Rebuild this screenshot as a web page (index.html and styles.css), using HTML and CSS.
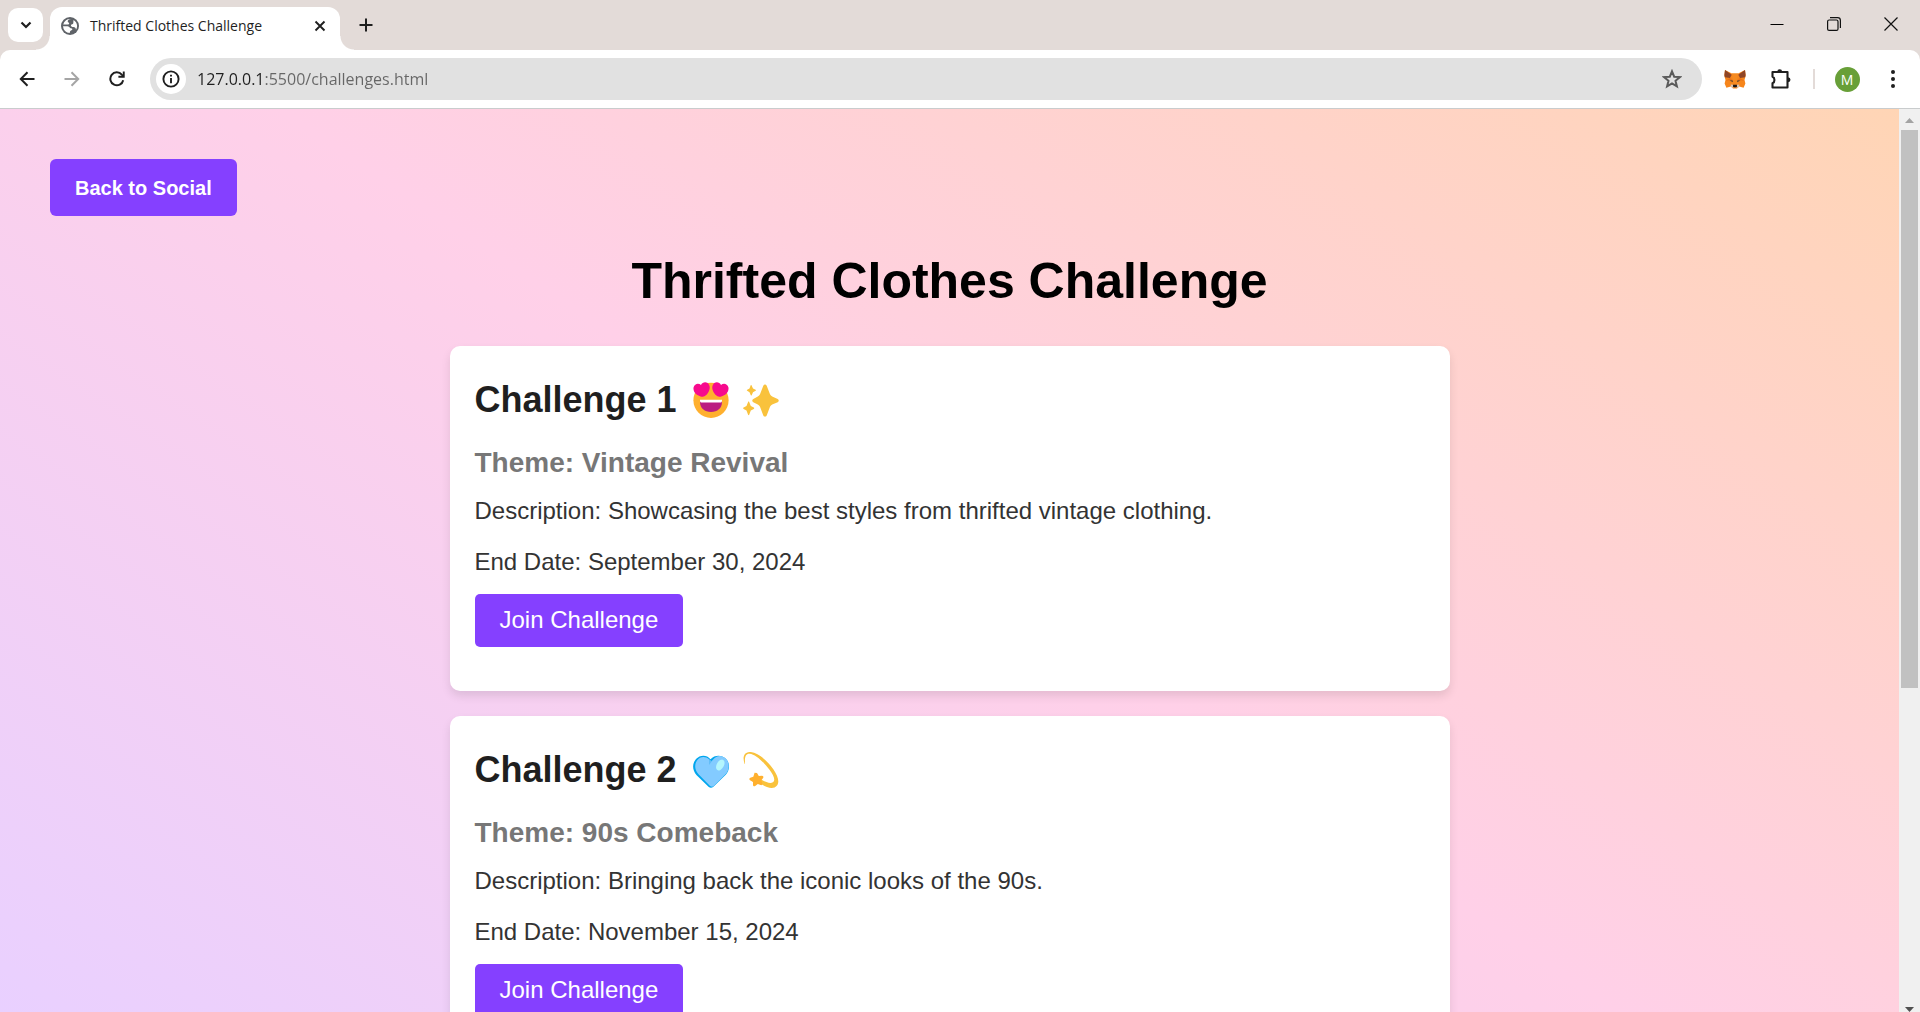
FILE: index.html
```html
<!DOCTYPE html>
<html lang="en">
<head>
<meta charset="utf-8">
<title>Thrifted Clothes Challenge</title>
<link rel="stylesheet" href="styles.css">
</head>
<body>
<header class="browser">
  <div class="tabstrip">
    <button class="tab-search" aria-label="Search tabs"><svg width="12" height="8" viewBox="0 0 12 8"><path d="M1.5 1.5 6 6l4.500-4.500" fill="none" stroke="#1f1f1f" stroke-width="2.200"/></svg></button>
    <div class="tab">
      <svg class="favicon" width="18" height="18" viewBox="0 0 18 18"><circle cx="9" cy="9" r="9" fill="#5f6368"/><path d="M10 2c-1.800.4-3.300 1-3.300 2.300 0 1.200 1.500 1.100 1.500 2.100 0 .9-1.300 1.200-2.600 1.200H2.200A7 7 0 0 1 10 2z" fill="#fff"/><path d="M2 9.200h3.200c1.900 0 2.900.5 3.500 1.400.5.800 1.300.7 2 .9 1 .3.900 1.400-.2 1.700-1.600.4-1.400 1.500-1.800 2.800A7 7 0 0 1 2 9.200z" fill="#fff"/><path d="M12.600 3c2.100 1.300 3.500 3.500 3.500 6 0 1.400-.4 2.700-1.100 3.800-.2-1.900-1-2.600-2.600-2.800-1.700-.2-2.500-.7-2.500-1.600 0-1 1.200-1 1.900-1.400.9-.5.300-2.300.8-4z" fill="#fff"/></svg>
      <span class="tab-title">Thrifted Clothes Challenge</span>
      <button class="tab-close" aria-label="Close tab"><svg width="12" height="12" viewBox="0 0 12 12"><path d="m1.500 1.500 9 9m0-9-9 9" stroke="#1f1f1f" stroke-width="1.900"/></svg></button>
    </div>
    <button class="new-tab" aria-label="New tab"><svg width="14" height="14" viewBox="0 0 14 14"><path d="M7 .5v13M.5 7h13" stroke="#1f1f1f" stroke-width="2"/></svg></button>
    <div class="window-controls">
      <button aria-label="Minimize"><svg width="14" height="14" viewBox="0 0 14 14"><path d="M.5 7.500h13" stroke="#000"/></svg></button>
      <button aria-label="Restore"><svg width="14" height="14" viewBox="0 0 14 14"><g fill="none" stroke="#111" stroke-width="1.200"><rect x=".6" y="3" width="10.400" height="10.400" rx="1.500"/><path d="M3 .6h7.600a2.800 2.800 0 0 1 2.800 2.800V11"/></g></svg></button>
      <button aria-label="Close"><svg width="14" height="14" viewBox="0 0 14 14"><path d="m.5.500 13 13m0-13-13 13" stroke="#111" stroke-width="1.200"/></svg></button>
    </div>
  </div>
  <nav class="toolbar">
    <div class="nav-buttons">
      <button aria-label="Back"><svg width="16" height="16" viewBox="0 0 16 16"><path d="M15.500 8H2m6.500-6.700L1.800 8l6.700 6.700" fill="none" stroke="#1f1f1f" stroke-width="2"/></svg></button>
      <button aria-label="Forward"><svg width="16" height="16" viewBox="0 0 16 16"><path d="M.5 8H14M7.500 1.300 14.200 8l-6.700 6.700" fill="none" stroke="#a5a5a5" stroke-width="2"/></svg></button>
      <button aria-label="Reload"><svg width="16" height="16" viewBox="0 0 16 16"><path d="M14.200 9.200A6.500 6.500 0 1 1 12.800 3.600L14.500 5.500" fill="none" stroke="#1f1f1f" stroke-width="2"/><path d="M15.700.4v6.300H9.400V4.800h4.400V.4z" fill="#1f1f1f"/></svg></button>
    </div>
    <div class="omnibox">
      <button class="site-info" aria-label="View site information"><svg width="18" height="18" viewBox="0 0 18 18"><circle cx="9" cy="9" r="7.600" fill="none" stroke="#1f1f1f" stroke-width="1.900"/><path d="M9 8v5.200M9 4.700v1.900" stroke="#1f1f1f" stroke-width="1.900"/></svg></button>
      <input class="url" type="text" aria-label="Address and search bar" value="127.0.0.1:5500/challenges.html">
      <button class="bookmark" aria-label="Bookmark this tab"><svg width="20" height="20" viewBox="0 0 20 20"><path d="m10 2.300 2.200 5.400 5.700.4-4.400 3.700 1.400 5.600L10 14.400l-4.900 3 1.400-5.600L2.100 8.100l5.700-.4z" fill="none" stroke="#5a5a5a" stroke-width="2"/></svg></button>
    </div>
    <div class="extensions">
      <button aria-label="MetaMask"><svg width="22" height="20" viewBox="0 0 22 20"><path d="M1 1 8 4.500h6L21 1l.7 5.500-1.200 4.500.9 3.500-1.800 4.200-4.400-1.200-2.200 2H9l-2.200-2-4.400 1.200L.6 14.500l.9-3.500L.3 6.500z" fill="#f6851b"/><path d="m1 1 6.700 4.700L6 9 .8 8.300.4 6zM21 1l-6.700 4.700L16 9l5.200-.7.400-2.300z" fill="#8f4526"/><path d="M8 4.500h6l-.8 6L15 15H7l1.800-4.500z" fill="#f58a20"/><path d="m6 9 2.800 1.500L1.500 12zM16 9l-2.800 1.500 7.300 1.500z" fill="#e97317"/><path d="m5.500 11.500 3-.3.500 2zM16.500 11.500l-3-.3-.5 2z" fill="#5a4030"/><path d="m6.800 15.500 2.200.2.400 3.600-2.600-1.800zM15.200 15.500l-2.200.2-.4 3.600 2.600-1.800z" fill="#d8c5b4"/><path d="m9.200 15.700 3.600 0 .3 1.900-.8.700H9.700l-.8-.7z" fill="#17191c"/></svg></button>
      <button aria-label="Extensions"><svg width="22" height="22" viewBox="0 0 22 22"><path d="M2.500 4h15v15.500h-15v-4.300c2.600-1 2.600-5.500 0-6.500z" fill="none" stroke="#1f1f1f" stroke-width="2.100" stroke-linejoin="round"/><path d="M7.300 3.600a2.400 2.400 0 0 1 4.800 0zM18 9.200a2.500 2.500 0 0 1 0 5z" fill="#1f1f1f"/></svg></button>
      <span class="divider"></span>
      <button aria-label="Profile"><span class="avatar">M</span></button>
      <button aria-label="Menu"><svg width="4" height="18" viewBox="0 0 4 18"><g fill="#1f1f1f"><circle cx="2" cy="2" r="2"/><circle cx="2" cy="9" r="2"/><circle cx="2" cy="16" r="2"/></g></svg></button>
    </div>
  </nav>
</header>
<div class="viewport">
  <main class="page">
    <a class="back" href="#">Back to Social</a>
    <h1>Thrifted Clothes Challenge</h1>
    <section class="challenges">
      <article class="card">
        <h2>Challenge 1
          <span class="emojis">
            <svg role="img" aria-label="Heart eyes" width="36" height="36" viewBox="0 0 36 36"><circle cx="18" cy="18.300" r="17.600" fill="#ffb02e"/><path d="M7 18h22v2c0 6.200-4.600 10-11 10S7 26.200 7 20z" fill="#bb1d80"/><path d="M7 17.800h22v1.300c0 .9-.6 1.500-1.500 1.500h-19c-.9 0-1.500-.6-1.500-1.500z" fill="#fff"/><g fill="#f70a8d"><path d="M.6 5.200C1.700 1.600 5.600.7 8 3.100 9.400-.2 14-.7 15.900 2.400c1.700 2.900.6 6.300-1.200 8.900-1.100 1.600-2.500 2.900-3.800 3.300-1.700.5-4.500-.4-7-1.900C1.300 11 0 8 .6 5.200z"/><path d="M35.400 5.200C34.300 1.600 30.400.7 28 3.100 26.600-.2 22-.7 20.100 2.400c-1.700 2.900-.6 6.300 1.200 8.900 1.100 1.600 2.500 2.900 3.800 3.300 1.700.5 4.500-.4 7-1.900C34.700 11 36 8 35.400 5.200z"/></g></svg>
            <svg role="img" aria-label="Sparkles" width="36" height="36" viewBox="0 0 36 36"><g fill="#f9c23c"><path d="M20.300 3.800c.7-1.600 2.700-1.600 3.400 0l3.300 8.500c.5 1 1.200 1.800 2.200 2.200l5.500 2.400c1.400.6 1.400 2.700 0 3.300l-5.500 2.400c-1 .4-1.700 1.200-2.200 2.200l-3.300 8.600c-.7 1.600-2.700 1.600-3.400 0L17 24.800c-.5-1-1.200-1.800-2.200-2.200l-4.500-2.400c-1.400-.6-1.400-2.700 0-3.300l4.500-2.400c1-.4 1.700-1.200 2.200-2.200z"/><path d="M8.500 3.300 10 6.400l2.600 1.300c.5.200.5.900 0 1.100L10 10.200l-1.300 3c-.2.500-.7.500-.9 0l-1.300-3-2.300-1.400c-.5-.2-.5-.9 0-1.100l2.300-1.300 1.200-3.100c.2-.5.600-.5.800 0zM6.200 20l1.600 4 3 1.600c.6.300.6 1.100 0 1.400l-3 1.600-1.600 4.100c-.2.600-.9.600-1.100 0l-1.600-4.100-2.900-1.600c-.6-.3-.6-1.100 0-1.400l2.900-1.600 1.600-4c.2-.6.900-.6 1.100 0z"/></g></svg>
          </span>
        </h2>
        <h3>Theme: Vintage Revival</h3>
        <p>Description: Showcasing the best styles from thrifted vintage clothing.</p>
        <p>End Date: September 30, 2024</p>
        <button class="join">Join Challenge</button>
      </article>
      <article class="card">
        <h2>Challenge 2
          <span class="emojis">
            <svg role="img" aria-label="Light blue heart" width="36" height="36" viewBox="0 0 36 36"><path d="M17.500 7.200C13.500 2.300 7 2.700 3 7c-4 4.500-3.800 11 .4 16L15.500 34.700c1.700 1.500 3.300 1.500 4.900 0L33 22.600c4.300-5.500 3.900-12-.4-16-4.500-4-11-3.500-15.100.6z" fill="#00a6ed"/><path d="M19.500 8.200C24 2.600 29 3 32.600 6.600c4.300 4 4 10.500.2 15.400L21 33.700c-1.300 1.200-2.500 1.300-4 .2L5.500 22.300c-4.300-5.100-4-10.300-1.500-13.800 3-4.200 8.500-4.500 12-1.300l2 2.300z" fill="#83cbff"/><path d="M19 9.300 16 13V7.200z" fill="#62bdf7"/><ellipse cx="27.300" cy="13" rx="3.600" ry="5.900" transform="rotate(30 27.300 13)" fill="#b4f6fd"/></svg>
            <svg role="img" aria-label="Dizzy" width="36" height="36" viewBox="0 0 36 36"><path d="M1.700 12C-.6 6.200.4.500 6.500 0 14.500-.6 25 9.500 30.500 17.500 35.500 24.700 37.700 33 31.600 35.400 27.200 37 21 34.500 15.500 30l2.500-2.500c5 3 9.400 4.300 11.900 2.800 3-2.100.6-7.200-3.400-12.500C20.500 9.800 12.500 2.200 6.700 1.700 2.500 1.500 1.400 5.500 2.100 11.800z" fill="#f9c23c"/><path d="m11.500 19.800 2.500.3 1.800 2.800 3.200-.2c1.200 0 1.800 1.200 1.100 2.200l-1.900 2.500 1.100 2.900c.4 1.200-.6 2.200-1.700 1.800l-2.800-1-2.600 1.900c-1 .7-2.200 0-2.200-1.100v-3l-3-1.700c-1-.7-.8-2.100.3-2.500l3-.9 1-3z" transform="translate(0 1)" fill="#ffb02e"/></svg>
          </span>
        </h2>
        <h3>Theme: 90s Comeback</h3>
        <p>Description: Bringing back the iconic looks of the 90s.</p>
        <p>End Date: November 15, 2024</p>
        <button class="join">Join Challenge</button>
      </article>
    </section>
  </main>
  <div class="scrollbar" aria-hidden="true">
    <svg class="arrow" width="9" height="5" viewBox="0 0 9 5"><path d="M4.500 0 9 5H0z" fill="#a3a3a3"/></svg>
    <span class="thumb"></span>
    <svg class="arrow" width="9" height="5" viewBox="0 0 9 5"><path d="M0 0h9L4.500 5z" fill="#505050"/></svg>
  </div>
</div>
</body>
</html>
```
FILE: styles.css
```css
* { box-sizing: border-box; }

body {
  margin: 0;
  height: 100vh;
  display: flex;
  flex-direction: column;
  overflow: hidden;
  font-family: "Liberation Sans", Arial, sans-serif;
}

button { font: inherit; border: 0; padding: 0; background: none; cursor: pointer; }

/* Browser frame */
.browser {
  flex: none;
  background: #e3dbd8;
  border-bottom: 1px solid #c9cccd;
  font-family: "Open Sans", "Noto Sans", sans-serif;
}
.browser button { display: flex; align-items: center; justify-content: center; }

.tabstrip { display: flex; align-items: flex-end; height: 50px; padding-left: 8px; }
.browser .tab-search { width: 35px; height: 34px; margin: 0 7px 8px 0; background: #fff; border-radius: 10px; }
.tab {
  position: relative;
  display: flex;
  align-items: center;
  width: 290px;
  height: 43px;
  padding: 0 10px 6px 11px;
  background: #fff;
  border-radius: 12px 12px 0 0;
}
.tab::before, .tab::after {
  content: "";
  position: absolute;
  bottom: 0;
  width: 14px;
  height: 14px;
}
.tab::before { left: -14px; background: radial-gradient(circle at 0 0, transparent 13px, #fff 14px); }
.tab::after { right: -14px; background: radial-gradient(circle at 100% 0, transparent 13px, #fff 14px); }
.tab-title { flex: 1; margin-left: 11px; font-size: 14px; color: #1f1f1f; white-space: nowrap; }
.tab-close { width: 20px; height: 20px; }
.new-tab { width: 36px; height: 36px; margin: 0 0 7px 8px; }
.window-controls { display: flex; align-self: flex-start; margin: 0 1px 0 auto; }
.window-controls button { width: 57px; height: 48px; }

.toolbar {
  display: flex;
  align-items: center;
  height: 58px;
  padding: 0 5px;
  background: #fff;
  border-radius: 10px 10px 0 0;
}
.toolbar button { width: 44px; height: 42px; }
.nav-buttons { display: flex; gap: 1px; }
.omnibox {
  flex: 1;
  display: flex;
  align-items: center;
  height: 42px;
  margin: 0 11px;
  padding: 0 8px 0 6px;
  background: #e1e1e1;
  border-radius: 21px;
}
.toolbar .site-info { width: 30px; height: 30px; background: #fff; border-radius: 50%; }
.url {
  flex: 1;
  margin-left: 11px;
  padding: 0;
  border: 0;
  outline: 0;
  font-family: inherit;
  font-size: 16px;
  color: transparent;
  background: linear-gradient(90deg, #1f1f1f 68px, #666 68px);
  -webkit-background-clip: text;
  background-clip: text;
}
.extensions { display: flex; align-items: center; gap: 2px; }
.divider { width: 2px; height: 20px; margin: 0 8px; background: #e3dbd8; }
.avatar {
  width: 25px;
  height: 25px;
  border-radius: 50%;
  background: #689f38;
  color: #fff;
  font-size: 14px;
  line-height: 25px;
}

/* Page area */
.viewport { flex: 1; min-height: 0; display: flex; }
.page {
  flex: 1;
  padding: 50px;
  overflow: hidden;
  background: linear-gradient(34deg, #e9d0ff, #ffd0e8 50%, #ffd5b5);
}
.back {
  display: inline-block;
  padding: 18px 25px 16px;
  border-radius: 6px;
  background: #8540ff;
  color: #fff;
  font-size: 20px;
  font-weight: bold;
  line-height: 23px;
  text-decoration: none;
}
h1 { margin: 37px 0 36px; font-size: 50px; line-height: 57px; text-align: center; color: #000; }
.challenges { max-width: 1000px; margin: 0 auto; display: grid; gap: 25px; }
.card {
  padding: 33px 25px 44px;
  background: #fff;
  border-radius: 10px;
  box-shadow: 0 5px 10px rgba(0, 0, 0, 0.1);
}
h2 { display: flex; align-items: center; gap: 16px; margin: 0 0 26px; font-size: 36px; line-height: 42px; color: #1f1f1f; }
.emojis { display: flex; gap: 14px; }
h3 { margin: 0 0 18px; font-size: 28px; line-height: 32px; color: #777; }
p { margin: 0 0 23px; font-size: 24px; line-height: 28px; color: #333; }
p + p { margin-bottom: 18px; }
.card .join {
  display: block;
  padding: 12px 25px 14px;
  border-radius: 5px;
  background: #8540ff;
  color: #fff;
  font-size: 24px;
  line-height: 27px;
}

.scrollbar {
  display: flex;
  flex-direction: column;
  align-items: center;
  width: 21px;
  padding-top: 9px;
  background: #f0f0f0;
}
.arrow { flex: none; }
.thumb { flex: 0 0 62.4%; width: 17px; margin: 7px 0 auto; background: #c1c1c1; }
```
